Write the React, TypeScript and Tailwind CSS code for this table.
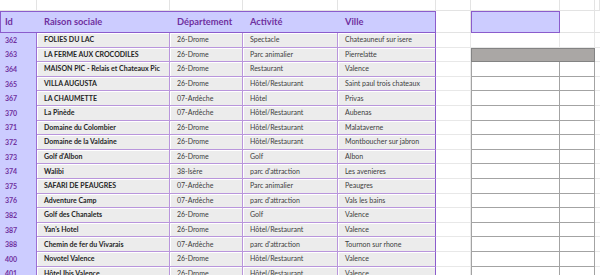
import React from "react";

type Place = [string, string, string, string, string];

const places: Place[] = [
  ["362", "FOLIES DU LAC", "26-Drome", "Spectacle", "Chateauneuf sur isere"],
  ["363", "LA FERME AUX CROCODILES", "26-Drome", "Parc animalier", "Pierrelatte"],
  ["364", "MAISON PIC - Relais et Chateaux Pic", "26-Drome", "Restaurant", "Valence"],
  ["365", "VILLA AUGUSTA", "26-Drome", "Hôtel/Restaurant", "Saint paul trois chateaux"],
  ["367", "LA CHAUMETTE", "07-Ardèche", "Hôtel", "Privas"],
  ["370", "La Pinède", "07-Ardèche", "Hôtel/Restaurant", "Aubenas"],
  ["371", "Domaine du Colombier", "26-Drome", "Hôtel/Restaurant", "Malataverne"],
  ["372", "Domaine de la Valdaine", "26-Drome", "Hôtel/Restaurant", "Montboucher sur jabron"],
  ["373", "Golf d'Albon", "26-Drome", "Golf", "Albon"],
  ["374", "Walibi", "38-Isère", "parc d'attraction", "Les avenieres"],
  ["375", "SAFARI DE PEAUGRES", "07-Ardèche", "Parc animalier", "Peaugres"],
  ["376", "Adventure Camp", "07-Ardèche", "parc d'attraction", "Vals les bains"],
  ["382", "Golf des Chanalets", "26-Drome", "Golf", "Valence"],
  ["387", "Yan's Hotel", "26-Drome", "Hôtel/Restaurant", "Valence"],
  ["388", "Chemin de fer du Vivarais", "07-Ardèche", "parc d'attraction", "Tournon sur rhone"],
  ["400", "Novotel Valence", "26-Drome", "Hôtel/Restaurant", "Valence"],
  ["401", "Hôtel Ibis Valence", "26-Drome", "Hôtel/Restaurant", "Valence"],
];

const cols = "grid grid-cols-[37px_133px_73px_95px_98px_35px_89px_35px_1fr]";
const cell = "bg-[#ececec] border-r border-b border-[#b996dc] shadow-[inset_1px_1px_0_#ffffff] pl-[7px] flex items-center truncate";

const App = () => {
  return (
    <div className="w-[600px] h-[275px] overflow-hidden bg-white font-['Lato','Liberation_Sans',sans-serif]">
      {/* top sheet strip */}
      <div className={`${cols} h-[11px]`}>
        {Array.from({ length: 9 }).map((_, i) => (
          <div key={i} className="border-r border-b border-[#e3e3e3]" />
        ))}
      </div>

      {/* header */}
      <div className={`${cols} h-[22px]`}>
        <div className="col-span-5 grid grid-cols-[37px_133px_73px_95px_1fr] bg-[#ccccff] border border-[#8b5ccc] text-[#7030a0] font-bold text-[9.3px]">
          <div className="pl-[4px] flex items-center">Id</div>
          <div className="pl-[6px] flex items-center">Raison sociale</div>
          <div className="pl-[6px] flex items-center">Département</div>
          <div className="pl-[6px] flex items-center">Activité</div>
          <div className="pl-[6px] flex items-center">Ville</div>
        </div>
        <div className="border-r border-b border-[#e3e3e3]" />
        <div className="bg-[#ccccff] border-[1.5px] border-[#8b5ccc]" />
        <div className="border-r border-b border-[#e3e3e3]" />
        <div className="border-b border-[#e3e3e3]" />
      </div>

      {/* rows */}
      {places.map((p, i) => (
        <div key={p[0]} className={`${cols} h-[14.6px] text-[7px] leading-none`}>
          <div className="bg-[#ccccff] border-r border-[#9b70d4] pl-[5px] flex items-center text-[#7030a0] font-bold">
            {p[0]}
          </div>
          <div className={`${cell} font-bold text-[#262626]`}>{p[1]}</div>
          <div className={`${cell} text-[#404040]`}>{p[2]}</div>
          <div className={`${cell} text-[#404040]`}>{p[3]}</div>
          <div className={`${cell} text-[#404040] border-r-[#8b5ccc]`}>{p[4]}</div>
          <div className="border-r border-b border-[#e8e8e8]" />
          {i === 0 ? (
            <>
              <div className="border-r border-b border-[#e8e8e8]" />
              <div className="border-r border-b border-[#e8e8e8]" />
            </>
          ) : i === 1 ? (
            <div className="col-span-2 bg-[#aaa7a5] border-[1.5px] border-[#838383]" />
          ) : (
            <>
              <div className="bg-white border-l-[1.5px] border-r-[1.5px] border-b border-[#a3a3a3]" />
              <div className="bg-white border-r-[1.5px] border-b border-[#a3a3a3]" />
            </>
          )}
          <div className="border-b border-[#e8e8e8]" />
        </div>
      ))}
    </div>
  );
};

export default App;
